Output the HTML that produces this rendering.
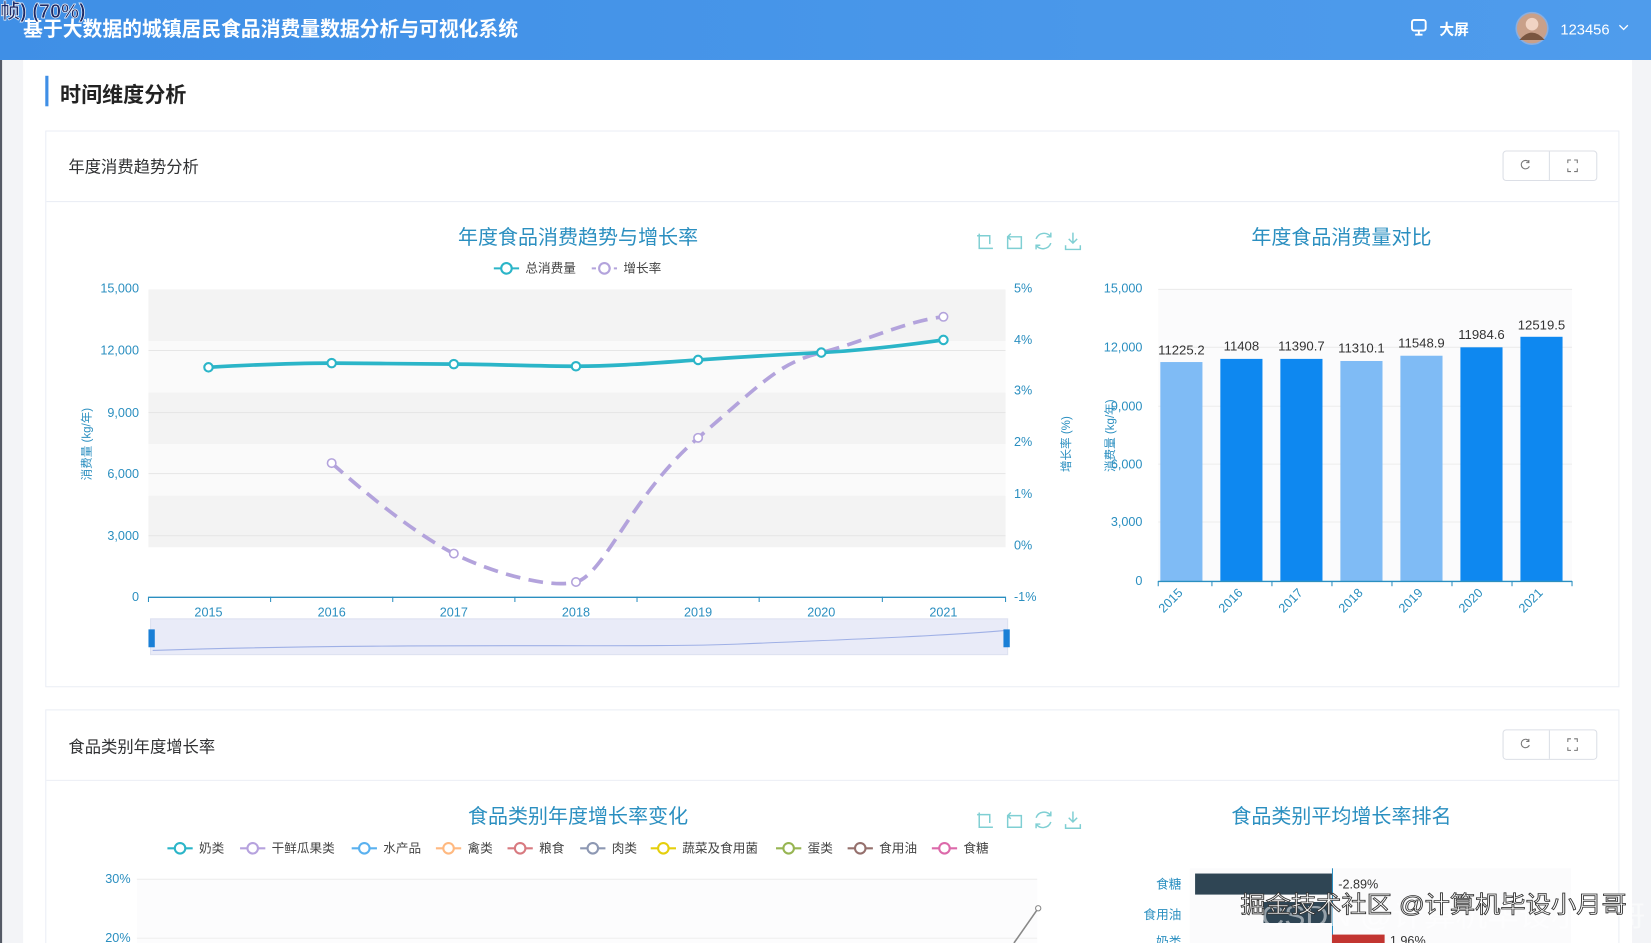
<!DOCTYPE html>
<html><head><meta charset="utf-8"><style>
html,body{margin:0;padding:0;width:1651px;height:943px;overflow:hidden;background:#fff}
svg{display:block}
text{font-family:"Liberation Sans","Noto Sans CJK SC",sans-serif}
</style></head><body>
<svg width="1651" height="943" viewBox="0 0 1568 896" preserveAspectRatio="none" xmlns="http://www.w3.org/2000/svg">
<defs>
<linearGradient id="hd" x1="0" x2="1" y1="0" y2="0"><stop offset="0" stop-color="#3f8fe6"/><stop offset="1" stop-color="#4f9cec"/></linearGradient>
</defs>
<rect x="0" y="0" width="1568" height="896" fill="#f3f4f7"/>
<rect x="22" y="57" width="1528" height="839" fill="#fff"/>
<rect x="0" y="57" width="2" height="839" fill="#555a66"/>
<rect x="0" y="0" width="1568" height="57" fill="url(#hd)"/>
<text x="22" y="34" font-size="19.5" font-weight="bold" fill="#fff" textLength="470" lengthAdjust="spacingAndGlyphs">基于大数据的城镇居民食品消费量数据分析与可视化系统</text>
<text x="0" y="17" font-size="19" font-weight="bold" fill="#1d2a66" stroke="#fff" stroke-width="0.6">帧) (70%)</text>
<rect x="1341" y="19" width="13" height="10" rx="2" fill="none" stroke="#fff" stroke-width="1.8"/>
<path d="M1344 33h7M1347.5 29v4" stroke="#fff" stroke-width="1.8"/>
<text x="1367" y="33" font-size="14" font-weight="bold" fill="#fff">大屏</text>
<circle cx="1455" cy="27" r="15" fill="#c9a089" stroke="#8aaee0" stroke-width="1.5"/>
<circle cx="1455" cy="23" r="6" fill="#f1d3c3"/>
<path d="M1443 38q12-14 24 0" fill="#7a5640"/>
<text x="1482" y="33" font-size="14" fill="#fff">123456</text>
<path d="M1538 24l4 4 4-4" stroke="#fff" stroke-width="1.2" fill="none"/>
<rect x="43" y="72" width="3" height="29" fill="#3f8fe6"/>
<text x="57" y="97" font-size="20" font-weight="bold" fill="#222">时间维度分析</text>

<rect x="43.5" y="124.5" width="1494" height="528" fill="#fff" stroke="#ebeef5"/>
<line x1="44" y1="191.5" x2="1537" y2="191.5" stroke="#ebeef5"/>
<text x="65" y="164" font-size="15.5" fill="#303133">年度消费趋势分析</text>
<rect x="1427.5" y="143.5" width="89" height="28" rx="3" fill="#fff" stroke="#dcdfe6"/>
<line x1="1471.5" y1="144" x2="1471.5" y2="171" stroke="#dcdfe6"/>
<path d="M1452 154a4 4 0 1 0 0.5 4M1452 152v2.5h-2.5" stroke="#777" fill="none" stroke-width="1"/>
<path d="M1489 155v-3h3M1495 152h3v3M1498 160v3h-3M1492 163h-3v-3" stroke="#777" fill="none" stroke-width="1"/>

<text x="549" y="232" font-size="19" fill="#2b8fc0" text-anchor="middle">年度食品消费趋势与增长率</text>
<g stroke="#7fcfd3" fill="none" stroke-width="1.4">
<path d="M930 222v14h13M928 224h12v8"/>
<path d="M957 225h13v11h-13zM957 225l3-3M957 225l3 3"/>
<path d="M998 225a8 8 0 0 0-14 2M984 233a8 8 0 0 0 14-2M998 221v4h-4M984 237v-4h4"/>
<path d="M1019 221v10M1015 227l4 4 4-4M1012 233v4h14v-4"/>
</g>
<line x1="469" y1="255" x2="493" y2="255" stroke="#2bb5c8" stroke-width="2"/><circle cx="481" cy="255" r="5" fill="#fff" stroke="#2bb5c8" stroke-width="2"/>
<text x="499" y="259" font-size="12" fill="#444">总消费量</text>
<line x1="562" y1="255" x2="586" y2="255" stroke="#b3a3dc" stroke-width="2" stroke-dasharray="4 3"/><circle cx="574" cy="255" r="5" fill="#fff" stroke="#b3a3dc" stroke-width="2"/>
<text x="592" y="259" font-size="12" fill="#444">增长率</text>
<rect x="141" y="275" width="814" height="49" fill="#f3f3f3"/>
<rect x="141" y="324" width="814" height="49" fill="#fafafa"/>
<rect x="141" y="373" width="814" height="49" fill="#f3f3f3"/>
<rect x="141" y="422" width="814" height="49" fill="#fafafa"/>
<rect x="141" y="471" width="814" height="49" fill="#f3f3f3"/>
<g stroke="#e6e6e6"><line x1="141" y1="333" x2="955" y2="333"/><line x1="141" y1="392" x2="955" y2="392"/><line x1="141" y1="450" x2="955" y2="450"/><line x1="141" y1="509" x2="955" y2="509"/></g>
<g font-size="12" fill="#2b8fc0" text-anchor="end">
<text x="132" y="278">15,000</text><text x="132" y="337">12,000</text><text x="132" y="396">9,000</text><text x="132" y="454">6,000</text><text x="132" y="513">3,000</text><text x="132" y="571">0</text>
</g>
<g font-size="12" fill="#2b8fc0">
<text x="963" y="278">5%</text><text x="963" y="327">4%</text><text x="963" y="375">3%</text><text x="963" y="424">2%</text><text x="963" y="473">1%</text><text x="963" y="522">0%</text><text x="963" y="571">-1%</text>
</g>
<text transform="translate(86,422) rotate(-90)" font-size="11" fill="#2b8fc0" text-anchor="middle">消费量 (kg/年)</text>
<text transform="translate(1016,422) rotate(-90)" font-size="11" fill="#2b8fc0" text-anchor="middle">增长率 (%)</text>
<line x1="141" y1="567.5" x2="955" y2="567.5" stroke="#2b8fc0" stroke-width="1.3"/>
<g stroke="#2b8fc0"><line x1="141" y1="567" x2="141" y2="572"/><line x1="257" y1="567" x2="257" y2="572"/><line x1="373" y1="567" x2="373" y2="572"/><line x1="489" y1="567" x2="489" y2="572"/><line x1="605" y1="567" x2="605" y2="572"/><line x1="721" y1="567" x2="721" y2="572"/><line x1="838" y1="567" x2="838" y2="572"/><line x1="955" y1="567" x2="955" y2="572"/></g>
<g font-size="12" fill="#2b8fc0" text-anchor="middle">
<text x="198" y="586">2015</text><text x="315" y="586">2016</text><text x="431" y="586">2017</text><text x="547" y="586">2018</text><text x="663" y="586">2019</text><text x="780" y="586">2020</text><text x="896" y="586">2021</text>
</g>
<path d="M315 440C360 480 400 510 431 526S520 560 547 553S600 470 663 416S740 345 780 335S860 305 896 301" stroke="#b3a3dc" stroke-width="3.5" fill="none" stroke-dasharray="14 8"/>
<path d="M198 349C250 346 280 345 315 345S400 346 431 346S510 348 547 348S620 345 663 342S740 337 780 335S860 328 896 323" stroke="#2bb5c8" stroke-width="3.5" fill="none"/>
<g fill="#fff" stroke="#2bb5c8" stroke-width="2"><circle cx="198" cy="349" r="4"/><circle cx="315" cy="345" r="4"/><circle cx="431" cy="346" r="4"/><circle cx="547" cy="348" r="4"/><circle cx="663" cy="342" r="4"/><circle cx="780" cy="335" r="4"/><circle cx="896" cy="323" r="4"/></g>
<g fill="#fff" stroke="#b3a3dc" stroke-width="1.5"><circle cx="315" cy="440" r="4"/><circle cx="431" cy="526" r="4"/><circle cx="547" cy="553" r="4"/><circle cx="663" cy="416" r="4"/><circle cx="896" cy="301" r="4"/></g>
<rect x="143" y="588" width="814" height="34" fill="#e9ebf8" stroke="#dde1f0"/>
<path d="M145 618C400 610 600 616 700 612S900 604 955 599" stroke="#9fb0e6" fill="none"/>
<rect x="141" y="598" width="6" height="17" fill="#1a7fd6"/>
<rect x="953" y="598" width="6" height="17" fill="#1a7fd6"/>

<text x="1274" y="232" font-size="19" fill="#2b8fc0" text-anchor="middle">年度食品消费量对比</text>
<rect x="1100" y="275" width="393" height="277" fill="#fbfbfc"/>
<g stroke="#ececec"><line x1="1100" y1="275" x2="1493" y2="275"/><line x1="1100" y1="330" x2="1493" y2="330"/><line x1="1100" y1="386" x2="1493" y2="386"/><line x1="1100" y1="441" x2="1493" y2="441"/><line x1="1100" y1="496" x2="1493" y2="496"/></g>
<g font-size="12" fill="#2b8fc0" text-anchor="end">
<text x="1085" y="278">15,000</text><text x="1085" y="334">12,000</text><text x="1085" y="390">9,000</text><text x="1085" y="445">6,000</text><text x="1085" y="500">3,000</text><text x="1085" y="556">0</text>
</g>
<text transform="translate(1058,414) rotate(-90)" font-size="11" fill="#2b8fc0" text-anchor="middle">消费量 (kg/年)</text>
<rect x="1102" y="344" width="40" height="208" fill="#7fbbf5"/>
<rect x="1159" y="341" width="40" height="211" fill="#0e88f0"/>
<rect x="1216" y="341" width="40" height="211" fill="#0e88f0"/>
<rect x="1273" y="343" width="40" height="209" fill="#7fbbf5"/>
<rect x="1330" y="338" width="40" height="214" fill="#7fbbf5"/>
<rect x="1387" y="330" width="40" height="222" fill="#0e88f0"/>
<rect x="1444" y="320" width="40" height="232" fill="#0e88f0"/>
<g font-size="12.5" fill="#333" text-anchor="middle">
<text x="1122" y="337">11225.2</text><text x="1179" y="333">11408</text><text x="1236" y="333">11390.7</text><text x="1293" y="335">11310.1</text><text x="1350" y="330">11548.9</text><text x="1407" y="322">11984.6</text><text x="1464" y="313">12519.5</text>
</g>
<line x1="1100" y1="552.5" x2="1493" y2="552.5" stroke="#2b8fc0" stroke-width="1.3"/>
<g stroke="#2b8fc0"><line x1="1100" y1="552" x2="1100" y2="557"/><line x1="1151" y1="552" x2="1151" y2="557"/><line x1="1208" y1="552" x2="1208" y2="557"/><line x1="1265" y1="552" x2="1265" y2="557"/><line x1="1322" y1="552" x2="1322" y2="557"/><line x1="1379" y1="552" x2="1379" y2="557"/><line x1="1436" y1="552" x2="1436" y2="557"/><line x1="1493" y1="552" x2="1493" y2="557"/></g>
<g font-size="12" fill="#2b8fc0" text-anchor="end">
<text transform="translate(1124,564) rotate(-45)">2015</text><text transform="translate(1181,564) rotate(-45)">2016</text><text transform="translate(1238,564) rotate(-45)">2017</text><text transform="translate(1295,564) rotate(-45)">2018</text><text transform="translate(1352,564) rotate(-45)">2019</text><text transform="translate(1409,564) rotate(-45)">2020</text><text transform="translate(1466,564) rotate(-45)">2021</text>
</g>

<rect x="43.5" y="674.5" width="1494" height="240" fill="#fff" stroke="#ebeef5"/>
<line x1="44" y1="741.5" x2="1537" y2="741.5" stroke="#ebeef5"/>
<text x="65" y="715" font-size="15.5" fill="#303133">食品类别年度增长率</text>
<rect x="1427.5" y="693.5" width="89" height="28" rx="3" fill="#fff" stroke="#dcdfe6"/>
<line x1="1471.5" y1="694" x2="1471.5" y2="721" stroke="#dcdfe6"/>
<path d="M1452 704a4 4 0 1 0 0.5 4M1452 702v2.5h-2.5" stroke="#777" fill="none" stroke-width="1"/>
<path d="M1489 705v-3h3M1495 702h3v3M1498 710v3h-3M1492 713h-3v-3" stroke="#777" fill="none" stroke-width="1"/>
<text x="549" y="782" font-size="19" fill="#2b8fc0" text-anchor="middle">食品类别年度增长率变化</text>
<g stroke="#7fcfd3" fill="none" stroke-width="1.4">
<path d="M930 772v14h13M928 774h12v8"/>
<path d="M957 775h13v11h-13zM957 775l3-3M957 775l3 3"/>
<path d="M998 775a8 8 0 0 0-14 2M984 783a8 8 0 0 0 14-2M998 771v4h-4M984 787v-4h4"/>
<path d="M1019 771v10M1015 777l4 4 4-4M1012 783v4h14v-4"/>
</g>
<g font-size="12" fill="#444" stroke-width="2">
<line x1="159" y1="806" x2="183" y2="806" stroke="#2bb5c8"/><circle cx="171" cy="806" r="5" fill="#fff" stroke="#2bb5c8"/><text x="189" y="810">奶类</text>
<line x1="228" y1="806" x2="252" y2="806" stroke="#b6a2de"/><circle cx="240" cy="806" r="5" fill="#fff" stroke="#b6a2de"/><text x="258" y="810">干鲜瓜果类</text>
<line x1="334" y1="806" x2="358" y2="806" stroke="#5ab1ef"/><circle cx="346" cy="806" r="5" fill="#fff" stroke="#5ab1ef"/><text x="364" y="810">水产品</text>
<line x1="414" y1="806" x2="438" y2="806" stroke="#ffb980"/><circle cx="426" cy="806" r="5" fill="#fff" stroke="#ffb980"/><text x="444" y="810">禽类</text>
<line x1="482" y1="806" x2="506" y2="806" stroke="#d87a80"/><circle cx="494" cy="806" r="5" fill="#fff" stroke="#d87a80"/><text x="512" y="810">粮食</text>
<line x1="551" y1="806" x2="575" y2="806" stroke="#8d98b3"/><circle cx="563" cy="806" r="5" fill="#fff" stroke="#8d98b3"/><text x="581" y="810">肉类</text>
<line x1="618" y1="806" x2="642" y2="806" stroke="#e5cf0d"/><circle cx="630" cy="806" r="5" fill="#fff" stroke="#e5cf0d"/><text x="648" y="810">蔬菜及食用菌</text>
<line x1="737" y1="806" x2="761" y2="806" stroke="#97b552"/><circle cx="749" cy="806" r="5" fill="#fff" stroke="#97b552"/><text x="767" y="810">蛋类</text>
<line x1="805" y1="806" x2="829" y2="806" stroke="#95706d"/><circle cx="817" cy="806" r="5" fill="#fff" stroke="#95706d"/><text x="835" y="810">食用油</text>
<line x1="885" y1="806" x2="909" y2="806" stroke="#dc69aa"/><circle cx="897" cy="806" r="5" fill="#fff" stroke="#dc69aa"/><text x="915" y="810">食糖</text>
</g>
<rect x="130" y="835" width="855" height="61" fill="#fcfcfd"/>
<line x1="130" y1="835.5" x2="985" y2="835.5" stroke="#eee"/>
<line x1="130" y1="891.5" x2="985" y2="891.5" stroke="#eee"/>
<text x="124" y="839" font-size="12" fill="#2b8fc0" text-anchor="end">30%</text>
<text x="124" y="895" font-size="12" fill="#2b8fc0" text-anchor="end">20%</text>
<path d="M963 896L986 863" stroke="#888" stroke-width="1.5"/><circle cx="986" cy="863" r="2.5" fill="#fff" stroke="#888"/>

<text x="1274" y="782" font-size="19" fill="#2b8fc0" text-anchor="middle">食品类别平均增长率排名</text>
<rect x="1130" y="825" width="362" height="71" fill="#fbfbfc"/>
<line x1="1265.5" y1="825" x2="1265.5" y2="896" stroke="#2b8fc0"/>
<rect x="1135" y="830" width="130" height="20" fill="#2f4554"/>
<rect x="1200" y="857" width="65" height="20" fill="#2f4554"/>
<rect x="1265" y="888" width="50" height="10" fill="#c23531"/>
<g font-size="12" fill="#2b8fc0" text-anchor="end"><text x="1122" y="844">食糖</text><text x="1122" y="873">食用油</text><text x="1122" y="899">奶类</text></g>
<text x="1271" y="844" font-size="12" fill="#333">-2.89%</text>
<text x="1320" y="898" font-size="12" fill="#333">1.96%</text>
<text x="1198" y="880" font-size="27" fill="#fff" fill-opacity="0.5" textLength="365" lengthAdjust="spacingAndGlyphs">CSDN @计算机毕设小月哥</text>
<text x="1178" y="867" font-size="22" fill="#fff" stroke="#333" stroke-width="0.8" textLength="367" lengthAdjust="spacingAndGlyphs">掘金技术社区 @计算机毕设小月哥</text>
</svg>
</body></html>
